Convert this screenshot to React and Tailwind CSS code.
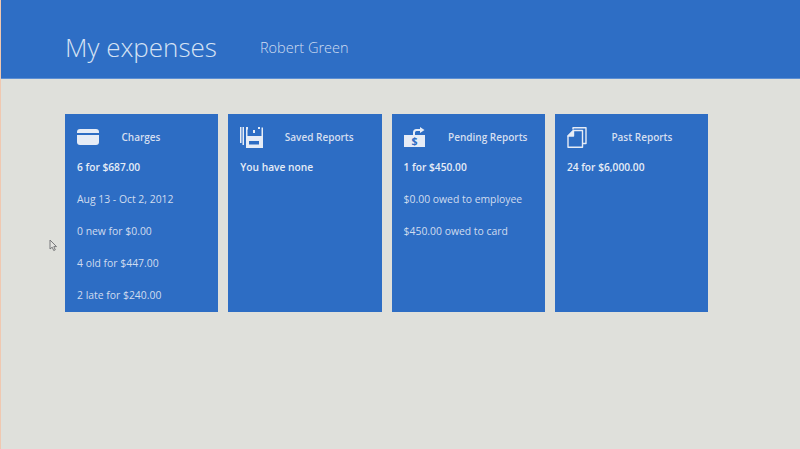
import React from 'react';

const CardIcon = () => (
    <svg width="22" height="16" viewBox="0 0 22 16" fill="#e6ecf6">
        <path d="M3 0h16a3 3 0 0 1 3 3v1H0V3a3 3 0 0 1 3-3z" />
        <path d="M0 6h22v7a3 3 0 0 1-3 3H3a3 3 0 0 1-3-3z" />
    </svg>
);

const SaveIcon = () => (
    <svg width="23" height="21" viewBox="0 0 23 21" fill="#e6ecf6">
        <path d="M0 0h1.500v16H0zM2.500 0H4v18H2.500z" />
        <path d="M6 0h2v2.500h-.500V9h14V0.500h1.500V21H6zM13 3h2v3h-2zM18 0h2v2h-2zM9 14v3.500h10V14z" fillRule="evenodd" />
    </svg>
);

const PendingIcon = () => (
    <svg width="22" height="20" viewBox="0 0 22 20" fill="#e6ecf6">
        <path d="M0 8h9V5.500A3.500 3.500 0 0 1 12.500 2H16V0l4.500 3L16 6V4h-3.500A1.500 1.500 0 0 0 11 5.500V8h10v12H0z" />
        <text x="10.500" y="18" textAnchor="middle" fontSize="10.500" fontWeight="700" fontFamily="Open Sans, sans-serif" fill="#2d6dc4">$</text>
    </svg>
);

const PastIcon = () => (
    <svg width="20" height="21" viewBox="0 0 20 21" fill="none" stroke="#e6ecf6" strokeWidth="1.400" strokeLinejoin="round">
        <path d="M6 2.500V.8h13v15.700h-3" />
        <path d="M6.500 3.500h9v16.700H1V9z" />
        <path d="M6.500 3.500V9H1z" fill="#e6ecf6" />
    </svg>
);

const cards = [
    { title: 'Charges', icon: <CardIcon />, rows: ['6 for $687.00', 'Aug 13 - Oct 2, 2012', '0 new for $0.00', '4 old for $447.00', '2 late for $240.00'] },
    { title: 'Saved Reports', icon: <SaveIcon />, rows: ['You have none'] },
    { title: 'Pending Reports', icon: <PendingIcon />, rows: ['1 for $450.00', '$0.00 owed to employee', '$450.00 owed to card'] },
    { title: 'Past Reports', icon: <PastIcon />, rows: ['24 for $6,000.00'] },
];

const Tile = ({ title, icon, rows }) => (
    <div className="w-[153.300px] h-[198px] bg-[#2d6dc4] pl-3 pt-[11px] text-[#dbe4f2] text-[10.400px] leading-[16px]">
        <div className="flex items-center h-6">
            <div className="w-[44.500px] flex items-center">{icon}</div>
            <span className="font-semibold text-[10px] text-[#d5dff0]">{title}</span>
        </div>
        <div className="flex flex-col gap-4 mt-[10px]">
            {rows.map((row, i) => (
                <div key={row} className={i === 0 ? 'font-semibold text-[10.200px] text-[#e6ecf6]' : 'text-[#d0dcef]'}>{row}</div>
            ))}
        </div>
    </div>
);

const App = () => (
    <div className="relative w-[800px] h-[449px] overflow-hidden bg-[#dfe0db] border-l border-[#f0c8b0] font-['Open_Sans',sans-serif]">
        <header className="h-[79px] bg-[#2e6ec5] flex items-center pl-16 pt-[16px] border-b border-[#5d8fd3]">
            <h1 className="text-[26px] font-light text-[#d5e2f4] w-[195px] leading-8">My expenses</h1>
            <span className="text-[14.500px] font-light text-[#d0ddf1] mt-0.5">Robert Green</span>
        </header>
        <main className="flex gap-[10px] pl-16 pt-[35px]">
            {cards.map((card) => (
                <Tile key={card.title} {...card} />
            ))}
        </main>
        <svg className="absolute left-[48px] top-[239px]" width="9" height="13" viewBox="0 0 9 13" fill="#e4e4e0" stroke="#77787a" strokeWidth="1">
            <path d="M1 1v9l2.200-1.800 1.500 3.300 1.600-.7-1.500-3.200h2.700z" />
        </svg>
    </div>
);

export default App;
